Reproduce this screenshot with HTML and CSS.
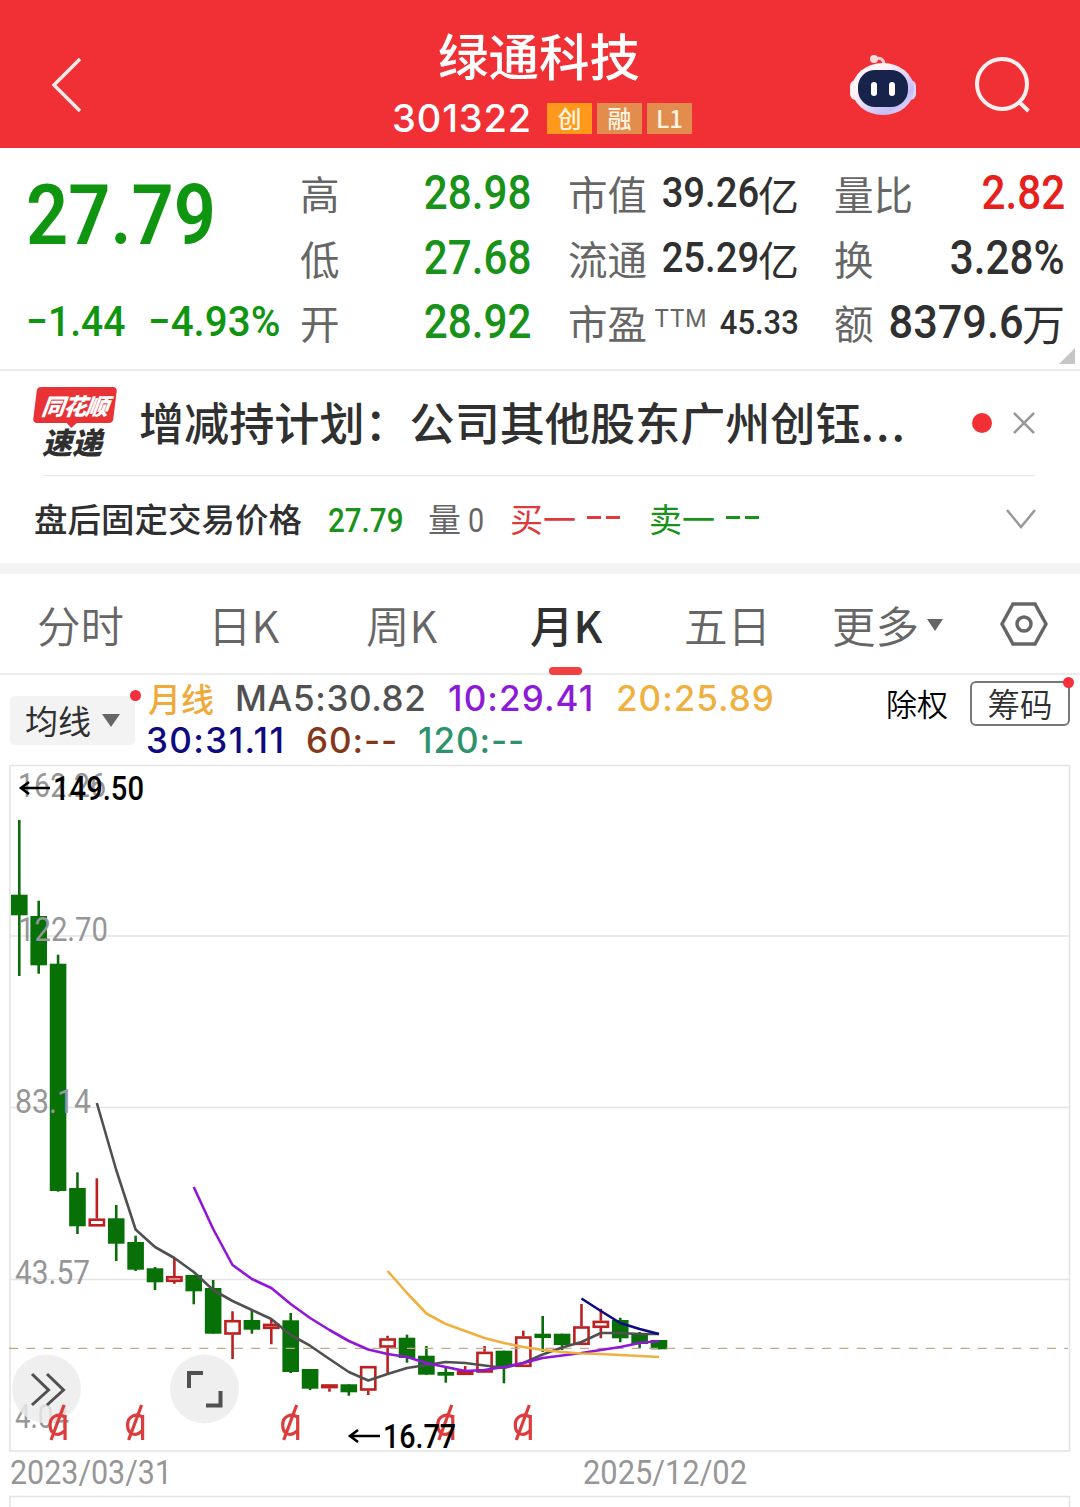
FILE: index.html
```html
<!DOCTYPE html>
<html lang="zh-CN">
<head>
  <meta charset="UTF-8" />
  <meta name="viewport" content="width=device-width, initial-scale=1" />
  <title>绿通科技 301322</title>
  <link rel="stylesheet" href="styles.css">
</head>
<body>

<header>
  <svg class="back" width="34" height="58" viewBox="0 0 34 58"><path d="M30 3 4 29 30 55" /></svg>
  <div class="stock">
    <h1>绿通科技</h1>
    <div class="code">
      <span class="num">301322</span>
      <span class="tag hot">创</span>
      <span class="tag">融</span>
      <span class="tag">L1</span>
    </div>
  </div>
  <svg class="robot" width="68" height="64" viewBox="0 0 68 64">
    <defs>
      <linearGradient id="shell" x1="0" y1="0" x2="1" y2="1">
        <stop offset="0.3" stop-color="#fff4f8" />
        <stop offset="0.75" stop-color="#c5bdf5" />
        <stop offset="1" stop-color="#f0ecff" />
      </linearGradient>
    </defs>
    <path d="M35 13c0-6-4-8-9-6" fill="none" stroke="#ffc9d0" stroke-width="3" />
    <circle cx="25" cy="7" r="4" fill="#ffdce0" />
    <rect x="1" y="28" width="12" height="20" rx="6" fill="#fff0f4" />
    <rect x="55" y="28" width="12" height="20" rx="6" fill="#ddd5fa" />
    <ellipse cx="34" cy="37" rx="31" ry="26" fill="url(#shell)" />
    <rect x="9" y="18" width="50" height="37" rx="17" fill="#18234c" />
    <rect x="22" y="30" width="6" height="14" rx="3" fill="#fff" />
    <rect x="40" y="30" width="6" height="14" rx="3" fill="#fff" />
  </svg>
  <svg class="search" width="58" height="58" viewBox="0 0 58 58">
    <circle cx="28" cy="29" r="25" />
    <path d="M44 46 54.5 56" />
  </svg>
</header>

<section class="quote">
  <div class="price">
    <div class="last"><b class="din">27.79</b></div>
    <div class="change"><b class="din">−1.44</b><b class="din">−4.93%</b></div>
  </div>
  <dl class="col col-a">
    <dt>高</dt><dd class="green"><b class="din">28.98</b></dd>
    <dt>低</dt><dd class="green"><b class="din">27.68</b></dd>
    <dt>开</dt><dd class="green"><b class="din">28.92</b></dd>
  </dl>
  <dl class="col col-b">
    <dt>市值</dt><dd><b class="din">39.26</b><i>亿</i></dd>
    <dt>流通</dt><dd><b class="din">25.29</b><i>亿</i></dd>
    <dt>市盈<sup>TTM</sup></dt><dd class="small"><b class="din">45.33</b></dd>
  </dl>
  <dl class="col col-c">
    <dt>量比</dt><dd class="red"><b class="din">2.82</b></dd>
    <dt>换</dt><dd><b class="din">3.28%</b></dd>
    <dt>额</dt><dd class="amount"><b class="din">8379.6</b><i>万</i></dd>
  </dl>
  <span class="corner"></span>
</section>

<section class="notice">
  <div class="express">
    <span class="brand">同花顺</span>
    <span class="word">速递</span>
  </div>
  <p>增减持计划：公司其他股东广州创钰<span class="dots">...</span></p>
  <span class="unread"></span>
  <svg class="close" width="24" height="24" viewBox="0 0 24 24"><path d="M2 2 22 22M22 2 2 22" /></svg>
</section>

<section class="after">
  <strong>盘后固定交易价格</strong>
  <span class="after-price"><b class="din">27.79</b></span>
  <span class="vol">量 <b class="din">0</b></span>
  <span class="buy">买一<i class="dash"></i><i class="dash"></i></span>
  <span class="sell">卖一<i class="dash"></i><i class="dash"></i></span>
  <svg class="more" width="32" height="22" viewBox="0 0 32 22"><path d="M2 2 16 19 30 2" /></svg>
</section>

<nav class="tabs">
  <a>分时</a>
  <a>日K</a>
  <a>周K</a>
  <a class="active">月K</a>
  <a>五日</a>
  <a>更多<i class="caret"></i></a>
  <svg class="setting" width="48" height="44" viewBox="0 0 48 44">
    <path d="M13 2H35L46 22 35 42H13L2 22Z" />
    <circle cx="24" cy="22" r="7" />
  </svg>
</nav>

<section class="legend">
  <div class="ma-select">均线<i class="caret"></i><span class="dot"></span></div>
  <div class="ma-list">
    <div class="line">
      <span class="period">月线</span>
      <span class="ma5">MA5:30.82</span>
      <span class="ma10">10:29.41</span>
      <span class="ma20">20:25.89</span>
    </div>
    <div class="line">
      <span class="ma30">30:31.11</span>
      <span class="ma60">60:--</span>
      <span class="ma120">120:--</span>
    </div>
  </div>
  <span class="rights">除权</span>
  <div class="chips">筹码<span class="dot"></span></div>
</section>

<svg id="chart" width="1080" height="747" viewBox="0 760 1080 747"></svg>

<script>
const STEP = 19.385;
const FIRST = 19.3;
const BODY = 16.6;

// [up?, high, body top, body bottom, low]
const candles = [
  [0, 820, 894.7, 915.3, 976],
  [0, 900.7, 916, 965.3, 973.7],
  [0, 954.7, 963.7, 1191, 1191.7],
  [0, 1172.3, 1188, 1226.3, 1234],
  [1, 1178.3, 1218.5, 1226.5, 1226.5],
  [0, 1205, 1218.3, 1243.7, 1261],
  [0, 1235.7, 1242, 1269.7, 1271],
  [0, 1267, 1268.3, 1282.3, 1290],
  [1, 1258.3, 1276, 1282, 1283.7],
  [0, 1275, 1275, 1291.3, 1304.3],
  [0, 1280, 1288, 1333.7, 1333.7],
  [1, 1311.3, 1320, 1334.7, 1359],
  [0, 1309.3, 1320, 1329.7, 1333.7],
  [1, 1320, 1323.7, 1329, 1344.3],
  [0, 1313, 1320.3, 1372, 1373],
  [0, 1369, 1369, 1388.7, 1390],
  [1, 1384.3, 1384.3, 1388.3, 1391.7],
  [0, 1384.3, 1384.3, 1392.3, 1395.7],
  [1, 1366, 1366, 1390.7, 1395],
  [1, 1335.7, 1338.3, 1347.7, 1373],
  [0, 1334.7, 1337.7, 1358, 1362.7],
  [0, 1346, 1355.7, 1374.7, 1374.7],
  [0, 1368, 1372, 1375.7, 1382.7],
  [1, 1366, 1370.5, 1375, 1375],
  [1, 1346, 1351.7, 1372.7, 1372.7],
  [0, 1350.7, 1350.7, 1367, 1383.3],
  [1, 1330.7, 1336.3, 1367, 1367],
  [0, 1316, 1333.7, 1338, 1352],
  [0, 1333.7, 1333.7, 1345, 1350],
  [1, 1304, 1326.3, 1345, 1345],
  [1, 1308.7, 1320.7, 1328, 1338.3],
  [0, 1317.7, 1320, 1338.3, 1342.3],
  [0, 1332, 1333.7, 1344, 1348],
  [0, 1340, 1340, 1349.3, 1349.3]
];

const averages = [
  { from: 4, color: "#505050", y: [1103, 1170, 1229.5, 1247, 1258, 1272, 1290, 1301, 1310, 1319, 1335, 1345.7, 1359, 1372, 1380.5, 1374, 1368, 1365, 1362, 1363, 1365.5, 1368, 1363, 1354.5, 1347.5, 1342, 1333, 1333, 1334, 1334] },
  { from: 9, color: "#9016d8", y: [1187, 1229, 1265, 1279, 1288, 1304, 1318, 1330, 1341, 1349.5, 1354, 1357, 1363, 1367, 1371, 1370, 1367, 1363, 1358, 1355.5, 1353, 1350, 1347, 1343, 1341] },
  { from: 19, color: "#f0b040", y: [1271, 1293, 1313.5, 1324, 1331, 1338, 1343, 1347, 1350, 1352, 1353.5, 1354, 1355, 1356, 1357] },
  { from: 29, color: "#100a80", y: [1298.5, 1311, 1323, 1329, 1334] }
];

const xAt = i => FIRST + i * STEP;

function label(x, y, width, text, cls) {
  return `<text class="${cls}" x="${x}" y="${y}" textLength="${width}" lengthAdjust="spacingAndGlyphs">${text}</text>`;
}

let out = `<path class="frame" d="M10 765.5H1069.5V1451H10ZM10 936H1069M10 1107.5H1069M10 1279.5H1069M10 1507V1496.5H1069.5V1507" />`;

candles.forEach(([up, high, top, bottom, low], i) => {
  const x = xAt(i);
  if (up) {
    out += `<path class="up" d="M${x} ${high}V${top}M${x} ${bottom}V${low}" />`;
    out += `<rect class="up" x="${x - BODY / 2 + 1.2}" y="${top + 1.2}" width="${BODY - 2.4}" height="${Math.max(bottom - top - 2.4, 1)}" />`;
  } else {
    out += `<path class="down" d="M${x} ${high}V${low}" />`;
    out += `<rect class="down" x="${x - BODY / 2}" y="${top}" width="${BODY}" height="${bottom - top}" />`;
  }
});

out += `<path class="current" d="M9 1348.3H1068" />`;

averages.forEach(a => {
  const points = a.y.map((y, i) => xAt(a.from + i) + "," + y).join(" ");
  out += `<polyline class="ma" points="${points}" stroke="${a.color}" />`;
});

out += label(18, 797, 88, "162.26", "axis");
out += label(18, 941, 90, "122.70", "axis");
out += label(15, 1112.5, 76, "83.14", "axis");
out += label(15, 1284, 75, "43.57", "axis");
out += label(15, 1428, 54, "4.04", "axis");
out += label(10, 1484, 162, "2023/03/31", "axis");
out += label(583, 1484, 164, "2025/12/02", "axis");

// round tool buttons
out += `<g class="tool"><circle cx="46.5" cy="1389" r="34.5" /><path d="M32 1374 48.5 1390 32 1405M47 1374 63.5 1390 47 1405" /></g>`;
out += `<g class="tool"><circle cx="204.5" cy="1389" r="34.5" /><path class="thick" d="M189 1388V1373H203M220.5 1391V1405.5H206" /></g>`;

// ex-rights markers
[2, 6, 14, 22, 26].forEach(i => {
  const x = xAt(i);
  out += `<path class="mark" d="M${x + 7} 1415V1440M${x + 7} 1417C${x} 1413 ${x - 8} 1416 ${x - 8} 1425S${x} 1438 ${x + 7} 1430M${x + 6} 1405 ${x - 7} 1440" />`;
});

out += `<path class="arrow" d="M50 788H21M29 782 21 788 29 794M380 1436H350M358 1430 350 1436 358 1442" />`;
out += label(53, 800, 91, "149.50", "extreme");
out += label(383, 1448, 73, "16.77", "extreme");

document.getElementById("chart").innerHTML = out;
</script>

</body>
</html>
```

FILE: styles.css
```css
* { box-sizing: border-box; }
body { margin: 0; width: 1080px; height: 1507px; overflow: hidden; background: #fff; color: #303030; font-family: "Noto Sans CJK SC", sans-serif; }
h1, p, dl, dd { margin: 0; }
i { font-style: normal; }
svg { display: block; flex: none; }
.green { color: #189218; }
.red { color: #e8201c; }
.din { display: inline-block; flex: none; font-family: Roboto, sans-serif; font-weight: 500; transform: scaleX(0.88); transform-origin: right; }

/* header */
header { display: flex; height: 148px; background: #f03035; color: #fff; }
.back { margin: 56px 0 0 50px; fill: none; stroke: #ffe9ea; stroke-width: 3.5; }
.stock { width: 300px; margin-left: 308px; padding-top: 21px; }
h1 { margin-left: 46px; font-size: 50.5px; font-weight: 500; line-height: 66px; }
.code { display: flex; align-items: center; gap: 5px; height: 62px; line-height: 62px; }
.code .num { width: 150px; font-family: Inter, sans-serif; font-size: 38px; font-weight: 500; letter-spacing: 0.9px; }
.tag { width: 45px; height: 31px; background: #e28c4d; font-size: 24px; font-weight: 500; line-height: 29px; text-align: center; color: #fff4e0; }
.tag.hot { background: #fe991c; }
.robot { margin: 52px 0 0 157px; }
.search { margin: 55px 0 0 57px; fill: none; stroke: #fff0f0; stroke-width: 4; }

/* quote panel */
.quote { position: relative; display: flex; height: 223px; border-bottom: 2px solid #ebebeb; }
.price { width: 273px; padding-left: 26px; color: #109510; }
.price .din { transform-origin: left; }
.last { height: 134px; padding-top: 10px; font-size: 84px; line-height: 100px; }
.last .din { font-weight: 600; }
.change { display: flex; font-size: 42px; line-height: 80px; white-space: nowrap; }
.change .din { transform: scaleX(0.96); }
.change .din:first-child { width: 122px; transform: scaleX(0.93); }
.col { display: grid; grid-template-columns: 80px 1fr; grid-auto-rows: 64.5px; line-height: 64px; padding-top: 12px; }
.col-a { width: 231px; margin-left: 27px; }
.col-b { width: 231px; margin-left: 37px; }
.col-c { width: 231px; margin-left: 35px; grid-template-columns: 40px 1fr; }
dt { padding-top: 1px; font-size: 39.5px; color: #666; white-space: nowrap; }
dd { display: flex; justify-content: flex-end; padding-top: 1px; font-size: 48px; }
dd i { font-size: 43px; margin-left: -2px; }
.col-b dd { font-size: 42px; }
.col-b dd.small { font-size: 34px; }
.col-b dd .din { transform: scaleX(0.91); }
.col-b dd i { font-size: 41px; margin-left: -1px; }
.col-c dd.amount { font-size: 46px; }
.col-c dd.amount .din { transform: scaleX(0.94); }
sup { display: inline-block; margin-left: 7px; font: 24px/24px Inter, sans-serif; vertical-align: 12px; }
.corner { position: absolute; right: 5px; bottom: 5px; border: 8px solid; border-color: transparent #c6c6c6 #c6c6c6 transparent; }

/* notice */
.notice { display: flex; align-items: center; height: 104px; padding-left: 34px; }
.express { position: relative; width: 105px; height: 72px; font-weight: 900; font-style: italic; }
.brand { display: block; position: relative; width: 80px; height: 36px; margin-left: 1px; border-radius: 4px; background: #e83236; color: #fff; font-size: 23px; line-height: 36px; text-align: center; letter-spacing: -1px; transform: skewX(-7deg); }
.brand::after { content: ""; position: absolute; left: 34px; top: 36px; border: 5px solid transparent; border-top-color: #e83236; }
.word { display: block; margin: 1px 0 0 8px; font-size: 30px; line-height: 34px; }
.notice p { width: 833px; padding-bottom: 2px; font-size: 45.1px; font-weight: 500; line-height: 64px; white-space: nowrap; }
.dots { letter-spacing: 2px; }
.unread { width: 20px; height: 20px; border-radius: 50%; background: #f03035; }
.close { margin-left: 20px; fill: none; stroke: #999; stroke-width: 2.5; }

/* after-hours trading */
.after { position: relative; display: flex; align-items: center; height: 88px; padding: 0 0 3px 34px; font-size: 33px; }
.after::before { content: ""; position: absolute; left: 44px; right: 45px; top: 0; border-top: 1px solid #e6e6e6; }
.after strong { width: 294px; font-size: 33.5px; font-weight: 500; }
.after-price { width: 100px; color: #189218; font-size: 34px; }
.after .din { transform: scaleX(0.87); transform-origin: left; }
.vol { width: 82px; color: #666; white-space: nowrap; }
.vol .din { font-weight: 400; }
.buy, .sell { display: flex; align-items: center; width: 139px; color: #dc3a3c; }
.sell { width: 356px; color: #189218; }
.dash { width: 14px; height: 3px; margin-left: 5px; background: currentColor; }
.dash:first-of-type { margin-left: 11px; }
.more { margin-top: 2px; fill: none; stroke: #999; stroke-width: 2.5; }

/* tabs */
.tabs { display: grid; grid-template-columns: 171px 158px 164px 154px 148px 167px 1fr; height: 112px; padding-left: 37px; border-top: 11px solid #f4f4f4; border-bottom: 2px solid #ededed; font-size: 43.5px; font-weight: 350; line-height: 101px; color: #666; }
.tabs a { position: relative; white-space: nowrap; }
.tabs .active { font-weight: 500; color: #303030; }
.active::after { content: ""; position: absolute; left: 19px; bottom: 0; width: 33px; height: 8px; border-radius: 4px; background: #f04040; }
.caret { display: inline-block; border: 8.5px solid transparent; border-top: 12px solid #666; border-bottom: 0; margin-left: 8px; vertical-align: 12px; }
.setting { margin: 28px 0 0 1px; fill: none; stroke: #666; stroke-width: 3.5; }

/* legend */
.legend { position: relative; display: flex; height: 85px; padding-left: 10px; }
.ma-select { position: relative; width: 125px; height: 49px; margin-top: 21px; padding-left: 15px; border-radius: 5px; background: #f3f3f3; font-size: 33px; line-height: 48px; white-space: nowrap; }
.ma-select .caret { border-width: 13px 9.5px 0; margin-left: 11px; vertical-align: 7px; }
.dot { position: absolute; right: -6px; top: -6px; width: 11px; height: 11px; border-radius: 50%; background: #f5303c; }
.ma-list { width: 740px; margin-left: 11px; padding-top: 2px; font: 550 35px/42px Inter, sans-serif; white-space: nowrap; }
.line { display: flex; height: 42px; }
.line .period { width: 89px; padding-left: 2px; font-family: "Noto Sans CJK SC", sans-serif; font-size: 33px; font-weight: 500; color: #f0aa3c; }
.ma5 { width: 213px; color: #505050; letter-spacing: 0.6px; }
.ma10 { width: 168px; color: #8c1ad6; letter-spacing: 1.1px; }
.ma20 { color: #f0b040; letter-spacing: 1px; }
.ma30 { width: 160px; color: #100a80; letter-spacing: 1.4px; }
.ma60 { width: 112px; color: #85371a; letter-spacing: 0.9px; }
.ma120 { color: #2e936c; letter-spacing: 0.9px; }
.rights { width: 84px; font-size: 31px; line-height: 56px; font-weight: 350; color: #000; }
.chips { position: relative; width: 100px; height: 45px; margin-top: 6px; border: 2px solid #777; border-radius: 6px; font-size: 32.5px; font-weight: 350; line-height: 39px; text-align: center; }

/* chart */
#chart path, #chart polyline { fill: none; }
#chart .frame { stroke: #e4e4e4; stroke-width: 1.6; }
#chart .up { fill: none; stroke: #bd2020; stroke-width: 2.6; }
#chart path.down { stroke: #0a6c0a; stroke-width: 2.6; }
#chart rect.down { fill: #077007; }
#chart .current { stroke: #c0aa8e; stroke-width: 1.3; stroke-dasharray: 9 8.3; }
#chart .ma { stroke-width: 2.6; stroke-linejoin: round; }
#chart text { font-family: Roboto, sans-serif; }
#chart .axis { font-size: 33px; fill: #969696; }
#chart .extreme { font-size: 33px; font-weight: 500; fill: #000; }
#chart .arrow { stroke: #000; stroke-width: 2.6; }
#chart circle { fill: #ebebeb; fill-opacity: 0.82; }
#chart .tool path { stroke: #505050; stroke-width: 3; }
#chart .tool .thick { stroke-width: 4; }
#chart .mark { stroke: #dc3c3c; stroke-width: 3.2; }
```
